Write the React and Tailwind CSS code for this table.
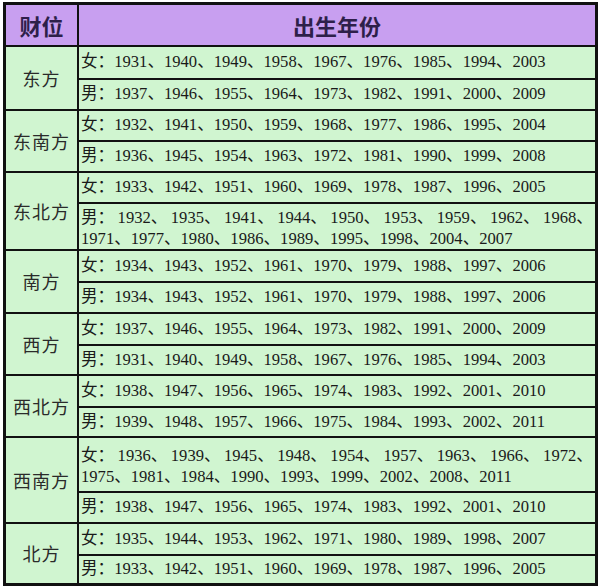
import React from "react";

const rows = [
  {
    label: "东方",
    f: ["1931", "1940", "1949", "1958", "1967", "1976", "1985", "1994", "2003"],
    m: ["1937", "1946", "1955", "1964", "1973", "1982", "1991", "2000", "2009"],
  },
  {
    label: "东南方",
    f: ["1932", "1941", "1950", "1959", "1968", "1977", "1986", "1995", "2004"],
    m: ["1936", "1945", "1954", "1963", "1972", "1981", "1990", "1999", "2008"],
  },
  {
    label: "东北方",
    f: ["1933", "1942", "1951", "1960", "1969", "1978", "1987", "1996", "2005"],
    m: {
      l1: ["1932", "1935", "1941", "1944", "1950", "1953", "1959", "1962", "1968"],
      l2: ["1971", "1977", "1980", "1986", "1989", "1995", "1998", "2004", "2007"],
    },
  },
  {
    label: "南方",
    f: ["1934", "1943", "1952", "1961", "1970", "1979", "1988", "1997", "2006"],
    m: ["1934", "1943", "1952", "1961", "1970", "1979", "1988", "1997", "2006"],
  },
  {
    label: "西方",
    f: ["1937", "1946", "1955", "1964", "1973", "1982", "1991", "2000", "2009"],
    m: ["1931", "1940", "1949", "1958", "1967", "1976", "1985", "1994", "2003"],
  },
  {
    label: "西北方",
    f: ["1938", "1947", "1956", "1965", "1974", "1983", "1992", "2001", "2010"],
    m: ["1939", "1948", "1957", "1966", "1975", "1984", "1993", "2002", "2011"],
  },
  {
    label: "西南方",
    f: {
      l1: ["1936", "1939", "1945", "1948", "1954", "1957", "1963", "1966", "1972"],
      l2: ["1975", "1981", "1984", "1990", "1993", "1999", "2002", "2008", "2011"],
    },
    m: ["1938", "1947", "1956", "1965", "1974", "1983", "1992", "2001", "2010"],
  },
  {
    label: "北方",
    f: ["1935", "1944", "1953", "1962", "1971", "1980", "1989", "1998", "2007"],
    m: ["1933", "1942", "1951", "1960", "1969", "1978", "1987", "1996", "2005"],
  },
];

function Cell({ sex, data }) {
  if (Array.isArray(data)) {
    return (
      <div className="bg-[#d0f5d0] flex items-center pl-[2px] font-[family-name:'Liberation_Serif','Noto_Sans_CJK_SC',serif] text-[16.6px] leading-none text-[#1a1a1a] whitespace-nowrap">
        {sex}：{data.join("、")}
      </div>
    );
  }
  return (
    <div className="bg-[#d0f5d0] flex flex-col justify-center pl-[2px] pr-[2px] pt-[3px] font-[family-name:'Liberation_Serif','Noto_Sans_CJK_SC',serif] text-[16.6px] leading-[21px] text-[#1a1a1a] whitespace-nowrap">
      <div className="flex justify-between">
        <span>{sex}：</span>
        {data.l1.map((y) => (
          <span key={y}>{y}、</span>
        ))}
      </div>
      <div>{data.l2.join("、")}</div>
    </div>
  );
}

export default function App() {
  return (
    <div className="w-[600px] h-[588px] bg-white pt-[2px] pl-[3px]">
      <div className="w-[595px] grid grid-cols-[71px_516px] grid-rows-[40px_31px_29px_29px_29px_29px_45px_30px_29px_30px_28px_30px_28px_53px_29px_30px_27px] gap-[2px] border-[3px] border-[#111] bg-[#111]">
        <div className="bg-[#c89ff0] flex items-center justify-center font-[family-name:'Noto_Sans_CJK_SC',sans-serif] text-[22px] font-bold text-[#2e1f4a]">
          财位
        </div>
        <div className="bg-[#c89ff0] flex items-center justify-center font-[family-name:'Noto_Sans_CJK_SC',sans-serif] text-[22px] font-bold text-[#2e1f4a]">
          出生年份
        </div>
        {rows.map((r) => (
          <React.Fragment key={r.label}>
            <div className="row-span-2 bg-[#d0f5d0] flex items-center justify-center font-[family-name:'Noto_Sans_CJK_SC',sans-serif] text-[18px] text-[#2a2a2a] tracking-[1px]">
              {r.label}
            </div>
            <Cell sex="女" data={r.f} />
            <Cell sex="男" data={r.m} />
          </React.Fragment>
        ))}
      </div>
    </div>
  );
}
